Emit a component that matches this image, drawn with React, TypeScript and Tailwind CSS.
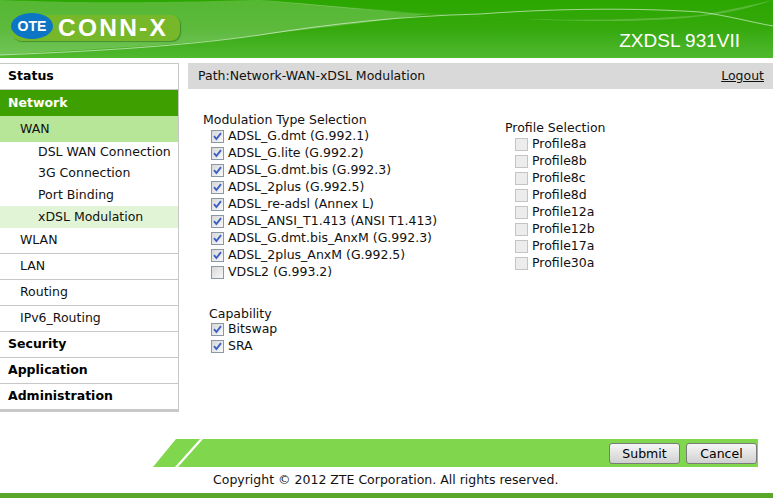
import type { ReactNode } from "react";

// ---------------------------------------------------------------------------
// Data
// ---------------------------------------------------------------------------

const MODULATIONS = [
  { label: "ADSL_G.dmt (G.992.1)", checked: true },
  { label: "ADSL_G.lite (G.992.2)", checked: true },
  { label: "ADSL_G.dmt.bis (G.992.3)", checked: true },
  { label: "ADSL_2plus (G.992.5)", checked: true },
  { label: "ADSL_re-adsl (Annex L)", checked: true },
  { label: "ADSL_ANSI_T1.413 (ANSI T1.413)", checked: true },
  { label: "ADSL_G.dmt.bis_AnxM (G.992.3)", checked: true },
  { label: "ADSL_2plus_AnxM (G.992.5)", checked: true },
  { label: "VDSL2 (G.993.2)", checked: false },
];

const PROFILES = ["Profile8a", "Profile8b", "Profile8c", "Profile8d", "Profile12a", "Profile12b", "Profile17a", "Profile30a"];

// ---------------------------------------------------------------------------
// Small pieces
// ---------------------------------------------------------------------------

function CheckRow({ label, checked, disabled }: { label: string; checked?: boolean; disabled?: boolean }) {
  return (
    <div className="flex h-[17px] items-center gap-[4px]">
      <span
        className={[
          "flex h-[13px] w-[13px] items-center justify-center border",
          disabled ? "border-[#c4c4c4] bg-[#ececec]" : "border-[#8b97a5] bg-gradient-to-br from-[#d8d8d8] to-[#f8f8f8]",
        ].join(" ")}
      >
        {checked && (
          <svg width="11" height="11" viewBox="0 0 11 11" aria-hidden="true">
            <path d="M2 5.2 L4.4 8 L9 2.2" fill="none" stroke="#3c5fc4" strokeWidth="1.9" />
          </svg>
        )}
      </span>
      <span>{label}</span>
    </div>
  );
}

function TopItem({ children, active }: { children: ReactNode; active?: boolean }) {
  return (
    <div
      className={[
        "flex h-[26px] items-center pl-[8px] font-bold",
        active ? "bg-[#3ea000] text-white" : "border-b border-[#c8c8c8] text-black",
      ].join(" ")}
    >
      {children}
    </div>
  );
}

function SubItem({ children, active }: { children: ReactNode; active?: boolean }) {
  return (
    <div
      className={[
        "flex h-[26px] items-center pl-[20px]",
        active ? "bg-[#b8e698]" : "border-b border-[#c8c8c8]",
      ].join(" ")}
    >
      {children}
    </div>
  );
}

function LeafItem({ children, active, tall }: { children: ReactNode; active?: boolean; tall?: boolean }) {
  return (
    <div
      className={[
        "flex items-center pl-[38px]",
        tall ? "h-[22px]" : "h-[21px]",
        active ? "bg-[#e2f4d6]" : "",
      ].join(" ")}
    >
      {children}
    </div>
  );
}

function Logo() {
  return (
    <div className="relative flex h-[26px] w-[168px] items-center rounded-[9px] bg-[#76b82a] pl-[46px] shadow-[1px_1px_1px_rgba(0,60,0,0.35)]">
      <span className="font-['Liberation_Sans',sans-serif] text-[24px] leading-none font-bold tracking-[2.2px] text-white [transform:scaleX(1.02)] [transform-origin:left]">
        CONN-X
      </span>
      <div className="absolute top-[-2px] left-[-1px] flex h-[26px] w-[42px] items-center justify-center rounded-[50%] bg-[#0d76c4]">
        <span className="font-['Liberation_Sans',sans-serif] text-[14px] leading-none font-bold text-white">OTE</span>
      </div>
    </div>
  );
}

function Button({ children }: { children: ReactNode }) {
  return (
    <button
      type="button"
      className="h-[21px] w-[71px] rounded-[3px] border border-[#7a7a7a] bg-gradient-to-b from-[#f6f6f6] to-[#d0d0d0] text-center leading-[19px] text-black"
    >
      {children}
    </button>
  );
}

// ---------------------------------------------------------------------------
// Page
// ---------------------------------------------------------------------------

export default function App() {
  return (
    <div className="flex h-[498px] w-[773px] flex-col overflow-hidden bg-white font-['DejaVu_Sans',sans-serif] text-[12.5px] leading-none text-[#111]">
      {/* Header */}
      <header className="relative flex h-[58px] items-end justify-between bg-gradient-to-b from-[#2ba600] via-[#35a90c] to-[#50b82e]">
        <svg className="absolute inset-0" width="773" height="58" viewBox="0 0 773 58" aria-hidden="true">
          <path d="M0 0 C60 2 120 4 260 0 L260 0 C340 6 380 12 430 14 C360 24 300 30 260 35 C160 48 60 50 0 55 Z" fill="#ffffff" opacity="0.2" />
          <path d="M0 55 C70 52 170 48 260 35 C330 24 400 16 480 14 C560 8 640 8 700 12 C730 16 750 22 773 26" fill="none" stroke="#ffffff" strokeWidth="1" opacity="0.55" />
          <path d="M260 0 C320 6 380 12 440 14 C520 21 620 22 700 15 C730 10 750 5 773 0 L773 0 C740 12 700 20 620 21 C540 22 480 16 430 14 Z" fill="#ffffff" opacity="0.2" />
        </svg>
        <div className="relative mb-[2px] ml-[12px] self-end pb-[15px]">
          <Logo />
        </div>
        <span className="relative mr-[33px] mb-[8px] font-['Liberation_Sans',sans-serif] text-[19px] leading-none text-white">
          ZXDSL 931VII
        </span>
      </header>

      {/* Body */}
      <div className="mt-[5px] flex flex-1 items-start">
        <nav className="w-[179px] border-t border-r border-b-2 border-[#c8c8c8] border-t-[#c8c8c8]">
          <TopItem>Status</TopItem>
          <TopItem active>Network</TopItem>
          <SubItem active>WAN</SubItem>
          <LeafItem>DSL WAN Connection</LeafItem>
          <LeafItem>3G Connection</LeafItem>
          <LeafItem tall>Port Binding</LeafItem>
          <LeafItem tall active>xDSL Modulation</LeafItem>
          <SubItem>WLAN</SubItem>
          <SubItem>LAN</SubItem>
          <SubItem>Routing</SubItem>
          <SubItem>IPv6_Routing</SubItem>
          <TopItem>Security</TopItem>
          <TopItem>Application</TopItem>
          <TopItem>Administration</TopItem>
        </nav>

        <main className="ml-[9px] flex-1">
          <div className="flex h-[26px] items-center justify-between bg-[#d9d9d9] pr-[9px] pl-[10px]">
            <span>Path:Network-WAN-xDSL Modulation</span>
            <span className="underline">Logout</span>
          </div>

          <div className="flex pl-[15px]">
            <div className="w-[302px]">
              <div className="mt-[25px] mb-[1px]">Modulation Type Selection</div>
              <div className="pl-[8px]">
                {MODULATIONS.map((m) => (
                  <CheckRow key={m.label} label={m.label} checked={m.checked} />
                ))}
              </div>
              <div className="mt-[27px] pl-[6px]">
                <div className="mb-[1px]">Capability</div>
                <div className="pl-[2px]">
                  <CheckRow label="Bitswap" checked />
                  <CheckRow label="SRA" checked />
                </div>
              </div>
            </div>

            <div>
              <div className="mt-[33px] mb-[1px]">Profile Selection</div>
              <div className="pl-[10px]">
                {PROFILES.map((p) => (
                  <CheckRow key={p} label={p} disabled />
                ))}
              </div>
            </div>
          </div>
        </main>
      </div>

      {/* Footer bar */}
      <div className="flex h-[28px] items-center pr-[15px] pl-[153px]">
        <svg width="53" height="28" viewBox="0 0 53 28" className="shrink-0" aria-hidden="true">
          <polygon points="0,28 23,0 53,0 53,28" fill="#80d64d" />
          <polygon points="22,28 25,28 50,0 47,0" fill="#ffffff" />
        </svg>
        <div className="flex h-full flex-1 items-center justify-end gap-[6px] bg-[#80d64d] pr-[1px]">
          <Button>Submit</Button>
          <Button>Cancel</Button>
        </div>
      </div>

      <div className="flex h-[26px] items-center pl-[213px]">Copyright © 2012 ZTE Corporation. All rights reserved.</div>
      <div className="h-[5px] bg-[#5aa829]" />
    </div>
  );
}
